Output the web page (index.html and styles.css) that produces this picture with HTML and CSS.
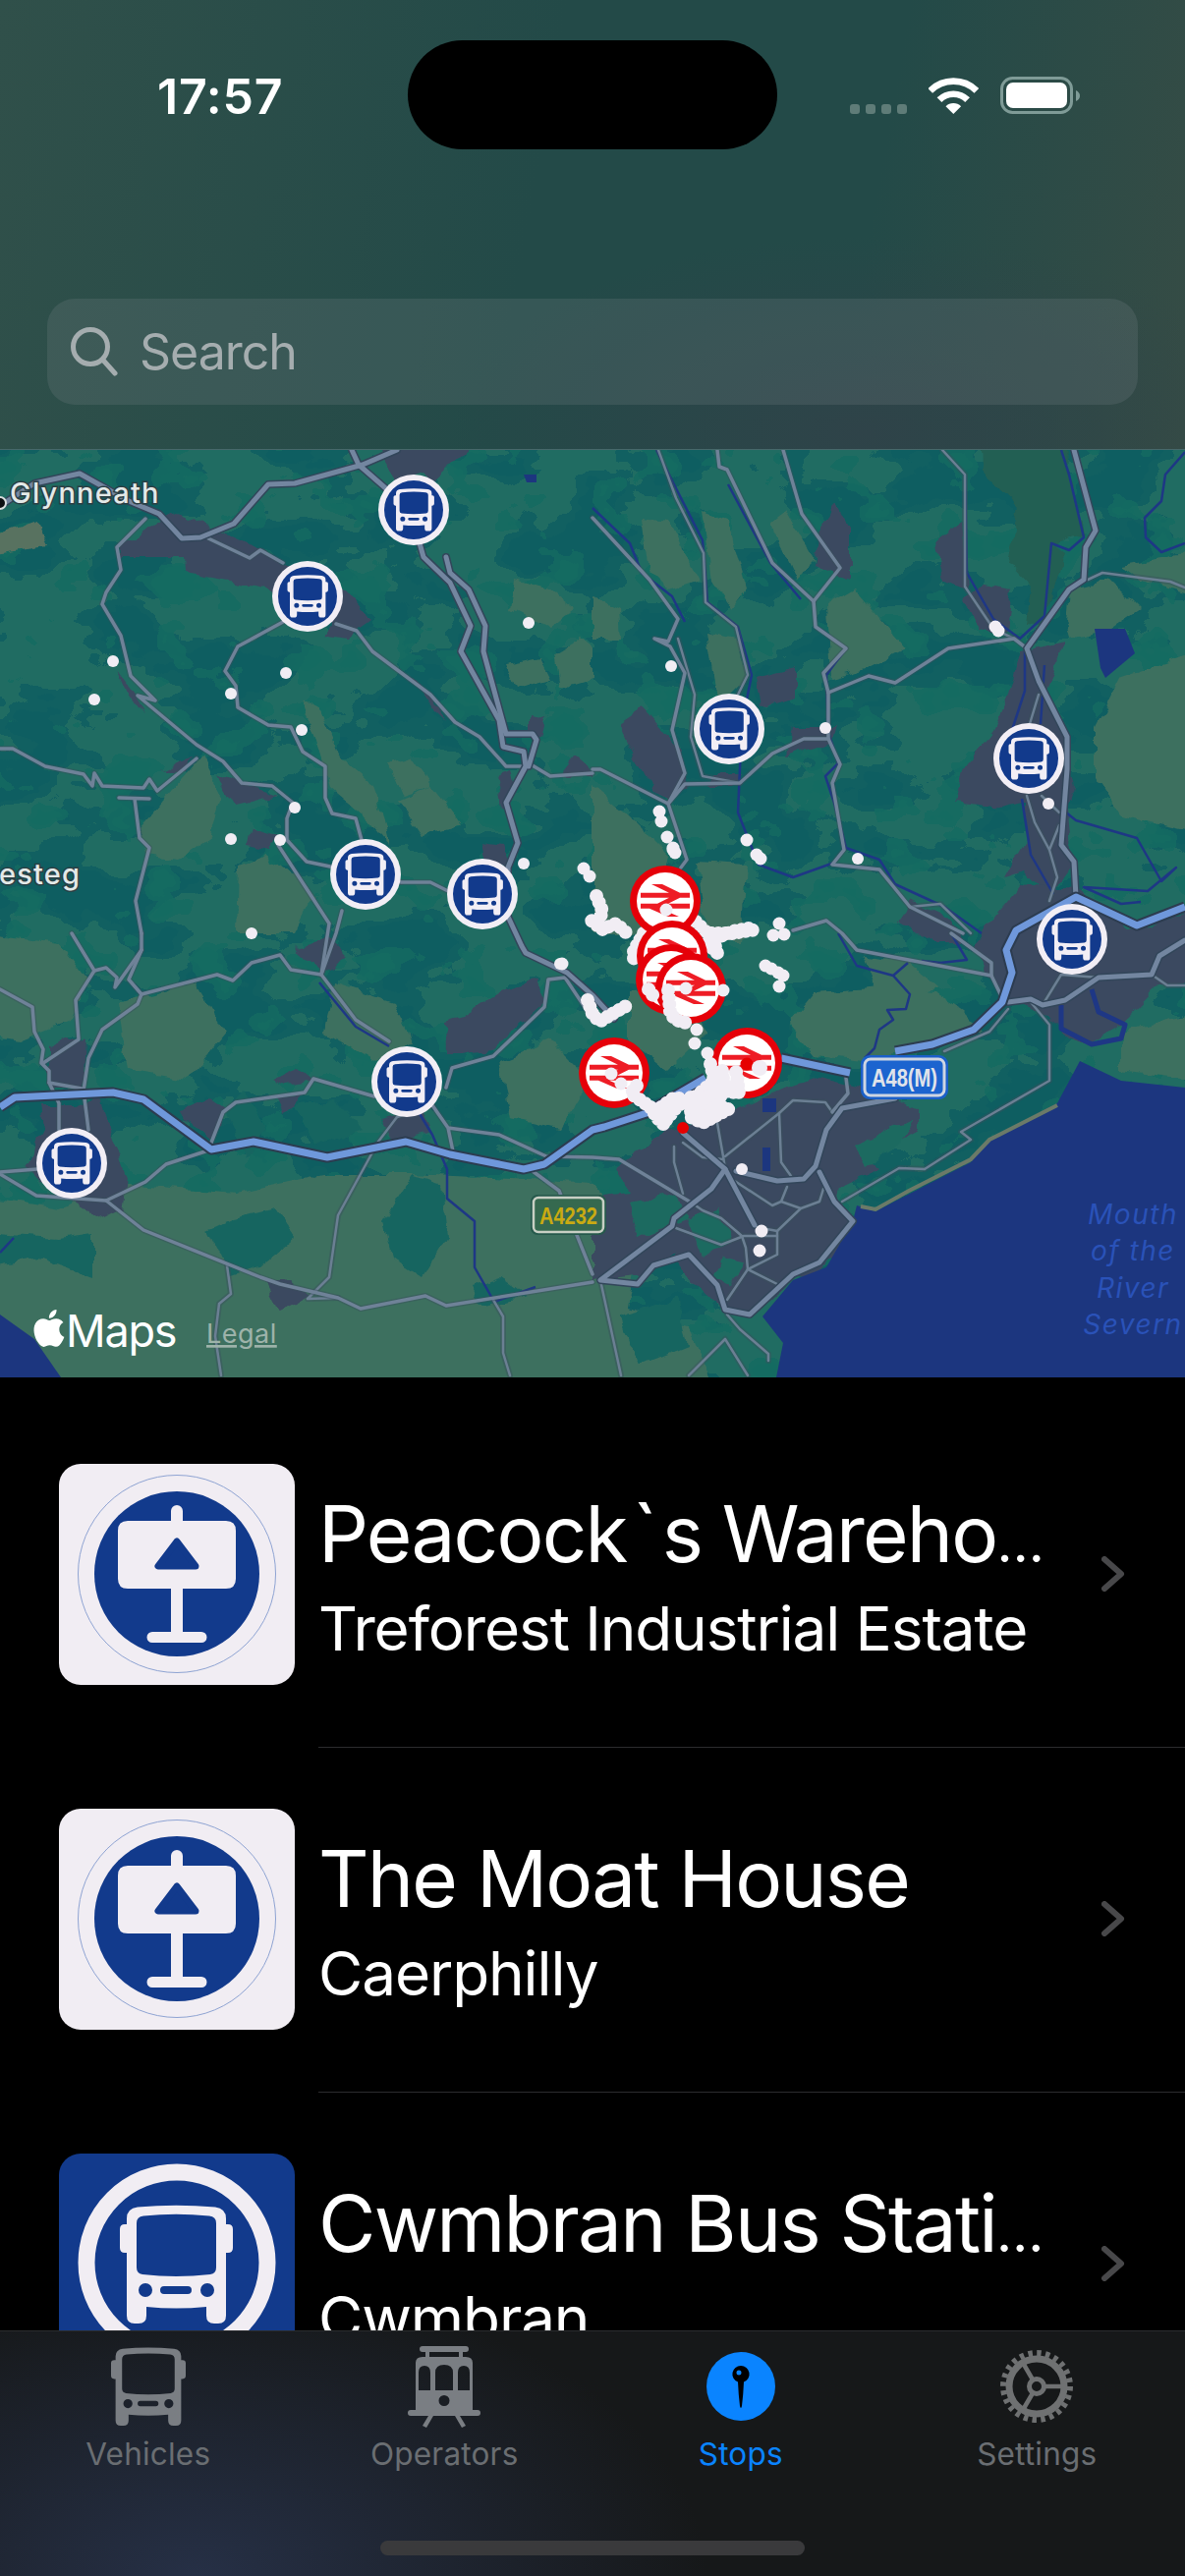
FILE: index.html
```html
<!DOCTYPE html>
<html lang="en">
<head>
<meta charset="utf-8">
<title>Stops</title>
<link rel="stylesheet" href="styles.css">
</head>
<body>
<svg class="defs" width="0" height="0" aria-hidden="true">
  <defs>
    <path id="bus" fill-rule="evenodd" d="M7 14Q7 4 18 2.5Q57-1 97 2.5Q108 4 108 14V20H110Q115 20 115 25V44Q115 49 110 49H108V113Q108 121 100 121H96Q88 121 88 113V104Q57 107 27 104V113Q27 121 19 121H15Q7 121 7 113V49H5Q0 49 0 44V25Q0 20 5 20H7ZM17 19Q17 12 24 11.5Q57 8 91 11.5Q98 12 98 19V64Q98 70 92 71Q57 75 23 71Q17 70 17 64ZM26 80A7 7 0 1 0 26 94A7 7 0 1 0 26 80ZM89 80A7 7 0 1 0 89 94A7 7 0 1 0 89 80ZM45 83H69Q73 83 73 87Q73 91 69 91H45Q41 91 41 87Q41 83 45 83Z"/>
  </defs>
</svg>
<main class="phone">
  <header class="top">
    <div class="status">
      <div class="status-left"><span class="time">17:57</span></div>
      <div class="island"></div>
      <div class="status-right">
        <div class="signal"><i></i><i></i><i></i><i></i></div>
        <svg class="wifi" width="51" height="37" viewBox="0 0 51 37"><path class="wifi-arc" d="M1.7 13.4A33.4 33.4 0 0 1 48.9 13.4"/><path class="wifi-arc" d="M11 22.7A20.2 20.2 0 0 1 39.6 22.7"/><path class="wifi-dot" d="M25.3 37L17.5 29.2A11 11 0 0 1 33.1 29.2Z"/></svg>
        <svg class="battery" width="82" height="38" viewBox="0 0 82 38"><rect class="bat-shell" x="1.5" y="1.5" width="71" height="35" rx="11"/><rect class="bat-fill" x="6" y="6" width="62" height="26" rx="7"/><path class="bat-nub" d="M77 14Q81 16 81 19.500Q81 23 77 25Z"/></svg>
      </div>
    </div>
    <div class="search">
      <svg class="search-icon" width="48" height="50" viewBox="0 0 48 50"><circle cx="20" cy="20" r="17.500"/><path d="M32.500 33L45 47"/></svg>
      <span class="search-text">Search</span>
    </div>
  </header>

  <section class="map">
    <svg class="map-svg" width="1206" height="944" viewBox="0 458 1206 944">
      <defs>
        <filter id="mottleA" x="0" y="0" width="100%" height="100%" color-interpolation-filters="sRGB">
          <feTurbulence type="fractalNoise" baseFrequency=".011 .017" numOctaves="4" seed="11"/>
          <feColorMatrix type="matrix" values="0 0 0 0 .055 0 0 0 0 .37 0 0 0 0 .38 1 0 0 0 0"/>
          <feComponentTransfer><feFuncA type="discrete" tableValues="0 0 0 0 0 .85 1 1 1 1"/></feComponentTransfer>
        </filter>
        <filter id="mottleB" x="0" y="0" width="100%" height="100%" color-interpolation-filters="sRGB">
          <feTurbulence type="fractalNoise" baseFrequency=".02 .026" numOctaves="3" seed="31"/>
          <feColorMatrix type="matrix" values="0 0 0 0 .08 0 0 0 0 .42 0 0 0 0 .38 1 0 0 0 0"/>
          <feComponentTransfer><feFuncA type="discrete" tableValues="0 0 0 0 0 0 .8 1 1 1"/></feComponentTransfer>
        </filter>
        <filter id="rough" x="-5%" y="-5%" width="110%" height="110%">
          <feTurbulence type="fractalNoise" baseFrequency=".06" numOctaves="2" seed="5"/>
          <feDisplacementMap in="SourceGraphic" scale="12" xChannelSelector="R" yChannelSelector="G"/>
        </filter>
        <g id="major">
          <path d="M0 515 35 492 81 482 131 510 162 523 185 548 204 547 238 533 273 493 300 492 369 473 404 458"/>
          <path d="M358 458 365 473 404 507 427 553 431 567 458 593 479 637 469 663 508 733 512 760 533 765 535 780 515 817 527 858 517 883 517 933 531 963 535 970 577 990 603 1013 625 1037"/>
          <path d="M454 567 458 583 477 600 494 637 492 663 515 747 542 747 546 753 538 780"/>
          <path d="M1093 458 1115 540 1105 557 1103 590 1088 600 1045 660 1057 693 1086 750 1086 783 1080 860 1093 877 1095 913"/>
          <path d="M1034 947 1024 967 1030 990 1020 1020 991 1048"/>
          <path d="M738 1190 724 1210 686 1240 684 1248 611 1303 649 1307 665 1288 701 1277 730 1308 738 1333 763 1338 807 1297 834 1285 868 1243 849 1223 834 1193"/>
          <path d="M749 1192 791 1202 818 1200 830 1187 841 1150 857 1128 911 1118"/>
          <path d="M1026 1020 1049 1017 1061 1023 1084 1018 1118 995 1172 992 1180 973 1206 957"/>
          <path d="M695 1153 738 1190 768 1247"/>
        </g>
        <g id="minor">
          <path d="M148 528 119 557 123 580 108 603 104 615 123 647 133 688 158 713 140 708 200 758 227 775 246 797 277 800 298 817 292 833 292 855 312 877 336 882"/>
          <path d="M0 762 13 762 46 780 85 788 94 800 96 787 104 800 146 802 152 793 160 805 200 772"/>
          <path d="M121 812 152 813M137 813 142 853 152 863 138 917 144 950"/>
          <path d="M212 548 254 568 265 560 288 573"/>
          <path d="M288 633 242 658 229 683 240 698 242 720 273 738 296 740 308 765 331 780 331 812 338 828 362 833 368 855"/>
          <path d="M342 635 363 642 379 663 438 707 463 735 488 750 515 780 531 780"/>
          <path d="M408 898 438 898 458 908"/>
          <path d="M540 778 560 790 603 787"/>
          <path d="M283 860 335 940 327 992 362 1038 396 1060"/>
          <path d="M348 927 342 950 327 992"/>
          <path d="M73 950 96 988 108 985 119 995 117 1005 144 967 144 950"/>
          <path d="M0 1007 33 1025 35 1050 44 1068 42 1082 50 1090 50 1102 60 1123 60 1150"/>
          <path d="M144 1012 131 997 144 967M96 988 77 1018 80 1058 44 1082"/>
          <path d="M144 1012 140 1022 104 1048 90 1077 85 1110 90 1150"/>
          <path d="M144 1012 221 992 237 998 256 980 285 972 296 987 327 992"/>
          <path d="M50 1102 83 1108"/>
          <path d="M454 1107 460 1087 502 1075 554 1025 558 997 575 995 603 1037"/>
          <path d="M319 1098 381 1116M319 1098 310 1112 240 1122 227 1132 215 1163"/>
          <path d="M215 1170 169 1185 148 1203 108 1222"/>
          <path d="M0 1193 38 1190M0 1195 37 1217 108 1222 146 1252 265 1300 285 1307 344 1321 367 1332 433 1319 454 1329 603 1305"/>
          <path d="M440 1125 456 1148 461 1172M456 1148 508 1155 556 1177 603 1178 630 1180 705 1225"/>
          <path d="M542 1192 569 1212 603 1297"/>
          <path d="M603 527 661 590 690 630 680 653 666 650 682 658 697 685 684 743 697 787 680 818 699 875 693 883"/>
          <path d="M797 458 816 523 855 578 828 612 830 638 861 660 838 685 843 705 843 752 855 778 847 797 859 865 847 880 895 885 926 923 980 950"/>
          <path d="M843 752 818 752 786 767 753 797 697 798 680 818"/>
          <path d="M603 783 611 783 680 818"/>
          <path d="M730 458 732 475 740 478 786 573 828 612"/>
          <path d="M843 705 884 688 911 695 965 660 1032 650 1045 660"/>
          <path d="M807 947 841 937 857 950 872 967 1009 993 1022 1020"/>
          <path d="M861 1097 863 1113 847 1132"/>
          <path d="M968 950 1009 980 1009 993"/>
        </g>
        <g id="thin">
          <path d="M670 458 688 507 716 563 718 613 749 638 761 687 751 707"/>
          <path d="M690 650 707 707 703 750 715 790 753 797"/>
          <path d="M959 458 982 483 982 597 1011 640 1032 650"/>
          <path d="M1107 590 1122 583 1191 592 1206 598"/>
          <path d="M1057 707 1047 740M1045 810 1053 837 1068 865 1076 893 1068 917M1078 840 1068 865M1078 827 1060 810"/>
          <path d="M926 923 957 920 988 950"/>
          <path d="M730 1143 736 1177 738 1190"/>
          <path d="M738 1177 793 1133 807 1120 840 1122 847 1132"/>
          <path d="M793 1133 795 1183 805 1197"/>
          <path d="M857 1223 915 1189 941 1190 988 1160 978 1152 1068 1100 1068 1043 1049 1020"/>
          <path d="M740 1197 786 1227 795 1223 801 1208M795 1223 815 1230 834 1223 838 1210M815 1230 791 1253 775 1250"/>
          <path d="M791 1253 791 1277 761 1292 740 1323"/>
          <path d="M761 1292 759 1270 755 1258 734 1240 715 1232 705 1225"/>
          <path d="M688 1250 734 1267 757 1258 791 1258"/>
          <path d="M761 1292 791 1307"/>
          <path d="M686 1167 686 1183 695 1215M695 1163 715 1178 736 1180"/>
          <path d="M611 1303 632 1400M738 1363 701 1400M738 1363 761 1400M753 1353 782 1378 782 1385M740 1338 753 1353"/>
          <path d="M1118 995 1080 992 1061 1023M1172 992 1188 1003 1206 1003"/>
          <path d="M1026 1027 1007 1050 961 1070"/>
          <path d="M404 1137 385 1162 344 1237 335 1300 313 1322 344 1321"/>
          <path d="M440 1125 404 1137"/>
          <path d="M231 1288 235 1317 223 1327 219 1360 225 1400"/>
          <path d="M502 1323 512 1340 512 1377 519 1400"/>
          <path d="M408 898 372 890"/>
        </g>
        <g id="br">
          <path d="M-25-8.300H25V-3.300H-25ZM-25 2.700H25V7.700H-25ZM-14-17H-3L15-8.300H4ZM4-3.300H15L3 2.700H-8ZM-16 7.700H-5L14 16H3Z"/>
        </g>
        <g id="rail">
          <circle class="rail-ring" r="36"/><circle class="rail-disc" r="29"/><use class="rail-mark" href="#br"/>
        </g>
        <g id="busm">
          <circle class="bus-ring" r="36"/><circle class="bus-disc" r="30"/><use class="bus-mark" href="#bus" transform="translate(-20.500 -22) scale(.36)"/>
        </g>
      </defs>

      <rect class="land" x="0" y="458" width="1206" height="944"/>
      <rect class="mottle-a" x="0" y="458" width="1206" height="944" filter="url(#mottleA)"/>
      <rect class="mottle-b" x="0" y="458" width="1206" height="944" filter="url(#mottleB)"/>

      <g class="olive" filter="url(#rough)">
        <path d="M-30 1215 60 1230 130 1205 240 1215 330 1195 420 1195 520 1200 603 1205 650 1260 640 1330 700 1350 740 1440H-30Z"/>
        <path d="M142 843 205 770 225 810 215 850 180 875 150 870Z"/>
        <path d="M242 883 270 870 320 910 300 950 240 950Z"/>
        <path d="M305 710 325 720 345 770 380 800 395 860 370 830 335 800 320 750Z"/>
        <path d="M396 777 420 770 440 800 410 810Z"/>
        <path d="M405 815 440 800 470 840 430 850Z"/>
        <path d="M525 590 560 600 585 620 560 640 520 620Z"/>
        <path d="M515 677 550 670 560 690 525 700Z"/>
        <path d="M565 665 590 650 603 660 603 690 570 700Z"/>
        <path d="M653 527 680 530 710 590 680 600 660 580Z"/>
        <path d="M715 520 740 530 760 600 745 620 725 590Z"/>
        <path d="M784 533 800 520 830 570 810 590Z"/>
        <path d="M841 617 870 600 920 660 880 680 845 690Z"/>
        <path d="M1115 740 1140 690 1230 660 1230 850 1140 830 1115 790Z"/>
        <path d="M1088 600 1130 590 1160 620 1130 640 1090 650 1085 630Z"/>
        <path d="M1140 575 1230 560 1230 610 1160 590Z"/>
        <path d="M603 607 630 620 632 650 603 650Z"/>
        <path d="M718 643 750 650 760 690 730 720Z"/>
        <path d="M710 877 760 880 755 960 720 960Z"/>
        <path d="M603 800 640 830 680 870 660 950 603 950Z"/>
        <path d="M803 1043 830 1010 900 1005 950 1010 980 1030 1000 1050 930 1065 880 1080 830 1075Z"/>
        <path d="M1140 1050 1230 1030 1230 1100 1140 1090Z"/>
        <path d="M880 975 925 980 955 1005 900 1025Z"/>
        <path d="M-30 950 60 960 90 1000 70 1040 20 1060 -30 1050Z"/>
        <path d="M120 1020 200 1000 230 1050 190 1100 130 1090Z"/>
        <path d="M340 1000 400 1020 420 1060 380 1080 330 1050Z"/>
        <path d="M510 1080 560 1060 600 1100 570 1150 520 1140Z"/>
        <path d="M640 1010 690 1000 720 1050 680 1090 640 1060Z"/>
      </g>
      <path class="tan" filter="url(#rough)" d="M-20 550 38 530 48 557 -20 567Z"/>
      <path class="forest" filter="url(#rough)" d="M997 440 1080 440 1103 543 1072 553 1084 562 1061 637 1045 635 1049 597 1026 573 1036 517 1003 483Z"/>
      <g class="teal" filter="url(#rough)">
        <path d="M212 1253 240 1240 280 1230 300 1260 265 1290 235 1300Z"/>
        <path d="M390 1245 420 1195 450 1205 455 1260 430 1300 400 1280Z"/>
        <path d="M480 1310 510 1300 540 1320 490 1330Z"/>
        <path d="M60 1260 95 1255 95 1300 40 1280 -20 1290 -20 1255Z"/>
        <path d="M630 1340 690 1320 700 1370 650 1390Z"/>
        <path d="M230 1130 250 1110 270 1150 250 1180Z"/>
        <path d="M300 1125 340 1120 370 1150 320 1165Z"/>
      </g>
      <g class="urban" filter="url(#rough)">
        <path d="M385 440 496 440 440 490 430 480 400 490Z"/>
        <path d="M123 557 180 520 254 553 288 573 346 597 379 630 354 650 331 647 338 633 269 597 188 583 187 567 123 567Z"/>
        <path d="M119 683 150 725 130 710Z"/>
        <path d="M420 690 440 710 455 735 440 720Z"/>
        <path d="M220 787 240 795 285 810 240 820Z"/>
        <path d="M165 785 195 770 190 785Z"/>
        <path d="M573 785 585 770 603 785 603 790 575 790Z"/>
        <path d="M505 790 520 785 525 800 510 820Z"/>
        <path d="M540 727 555 730 550 750 540 750Z"/>
        <path d="M255 843 285 850 275 865 250 860Z"/>
        <path d="M490 857 510 860 520 885 495 880Z"/>
        <path d="M849 510 865 540 865 590 830 575 835 540Z"/>
        <path d="M953 550 980 530 985 600 960 590Z"/>
        <path d="M980 610 1000 595 1030 600 1025 645 995 640Z"/>
        <path d="M770 690 810 680 810 710 775 720Z"/>
        <path d="M805 740 850 740 845 755 800 770Z"/>
        <path d="M630 737 655 720 690 760 700 800 680 815 655 790Z"/>
        <path d="M725 787 755 787 745 800 720 800Z"/>
        <path d="M972 817 980 783 1011 743 1026 710 1038 663 1084 653 1065 703 1080 737 1095 800 1088 823 1092 880 1068 913 1041 887 1022 893 1045 850 1045 817 1018 823Z"/>
        <path d="M990 960 1040 900 1096 905 1150 945 1230 925 1230 1000 1180 1003 1141 1043 1103 1063 1080 1050 1065 1033 1022 1017Z"/>
        <path d="M926 915 960 930 985 960 950 960 915 940Z"/>
        <path d="M680 1150 730 1137 776 1117 834 1097 911 1117 934 1127 934 1150 903 1167 884 1180 895 1190 853 1210 849 1227 872 1243 841 1290 807 1303 772 1333 763 1340 738 1333 699 1300 684 1277 657 1297 603 1303 603 1217 641 1213 625 1190 665 1160Z"/>
        <path d="M50 1065 70 1055 88 1060 85 1110 50 1105Z"/>
        <path d="M42 1125 75 1125 100 1115 130 1200 125 1230 105 1240 70 1220 25 1190 45 1150Z"/>
        <path d="M181 1130 215 1120 230 1130 215 1160Z"/>
        <path d="M281 1117 310 1115 300 1125 290 1135Z"/>
        <path d="M277 1098 305 1087 320 1100 290 1105Z"/>
        <path d="M454 1040 470 1035 510 1010 545 997 555 1020 500 1070 470 1075 455 1075Z"/>
        <path d="M385 1140 430 1130 440 1150 400 1160Z"/>
        <path d="M270 1305 295 1303 315 1320 285 1335Z"/>
        <path d="M300 965 335 955 355 975 330 990Z"/>
      </g>
      <g class="green-inset" filter="url(#rough)">
        <path d="M640 1225 690 1215 700 1240 650 1260Z"/>
        <path d="M700 1240 730 1230 745 1265 715 1280Z"/>
        <path d="M870 1165 900 1150 930 1140 910 1170 880 1190Z"/>
        <path d="M735 1280 755 1285 745 1310 725 1300Z"/>
      </g>

      <path class="water" d="M872 1227 891 1233 988 1183 1007 1160 1076 1123 1099 1080 1141 1100 1206 1107V1402H790L797 1367 776 1340 807 1303 841 1290 868 1243Z"/>
      <path class="water" d="M0 1338 35 1363 62 1402H0Z"/>
      <path class="lake" d="M1114 640 1145 640 1155 665 1125 690 1120 680Z"/>
      <path class="lake" d="M533 483H546V491H536ZM776 1118H790V1132H776ZM776 1168H784V1192H776Z"/>
      <path class="sand" d="M876 1228 891 1231 925 1212 988 1180 1007 1160 1076 1125"/>

      <g class="river">
        <path d="M603 517 641 553 653 583 684 607 697 633"/>
        <path d="M668 458 715 550 720 613 751 638 765 687 755 737 751 827 772 880 807 893 849 878"/>
        <path d="M741 493 784 573 815 610"/>
        <path d="M834 640 861 660 841 687 843 745 853 777 840 790 849 817 861 863 895 875 911 900 961 923 999 950"/>
        <path d="M982 483 984 583 1011 630 1038 650 1063 627 1070 553 1088 560 1103 547 1088 483 1080 458"/>
        <path d="M1206 460 1186 483 1182 510 1165 527 1166 547 1182 562 1206 553"/>
        <path d="M1043 663 1043 703 1030 743M1063 677 1059 737"/>
        <path d="M1040 813 1049 870 1072 910M1080 823 1095 835 1157 853 1182 897 1197 883 1168 907 1103 903 1141 920 1161 918"/>
        <path d="M853 950 872 983 909 993 926 1012 922 1027 903 1028 909 1038 895 1048 890 1067 880 1077M924 980 909 993M938 978 957 980 984 977 968 950"/>
        <path class="river-wide" d="M1111 1007 1118 1030 1145 1043 1141 1057 1111 1063 1080 1047 1080 1023"/>
        <path d="M325 1000 362 1045 396 1065M400 1130 423 1127 440 1155 455 1190 455 1220 483 1243 483 1290 503 1325 545 1310"/>
        <path d="M0 1275 14 1260"/>
      </g>

      <use class="casing-minor" href="#thin"/><use class="road-thin" href="#thin"/>
      <use class="casing-minor" href="#minor"/><use class="road-minor" href="#minor"/>
      <use class="casing-major" href="#major"/><use class="road-major" href="#major"/>

      <g class="motorway-case">
        <path d="M0 1127 15 1117 115 1112 146 1119 215 1170 258 1162 333 1178 413 1162 458 1175 533 1190 554 1185 603 1150 615 1147 661 1132 670 1125 718 1097"/>
        <path d="M795 1077 865 1092M911 1070 949 1063 991 1048 1020 1020 1030 990 1024 967 1034 947 1095 913 1157 942 1206 923"/>
      </g>
      <g class="motorway">
        <path d="M0 1127 15 1117 115 1112 146 1119 215 1170 258 1162 333 1178 413 1162 458 1175 533 1190 554 1185 603 1150 615 1147 661 1132 670 1125 718 1097"/>
        <path d="M795 1077 865 1092M911 1070 949 1063 991 1048 1020 1020 1030 990 1024 967 1034 947 1095 913 1157 942 1206 923"/>
      </g>

      <g class="shield-a4232">
        <rect class="sh-outer" x="540" y="1216" width="77" height="41" rx="7"/>
        <rect class="sh-inner" x="543" y="1219" width="71" height="35" rx="5"/>
        <text class="sh-text-y" x="578.500" y="1246" text-anchor="middle" textLength="59" lengthAdjust="spacingAndGlyphs">A4232</text>
      </g>
      <g class="shield-a48">
        <rect class="sh-outer-b" x="876" y="1074" width="89" height="45" rx="9"/>
        <rect class="sh-inner-b" x="880" y="1078" width="81" height="37" rx="6"/>
        <text class="sh-text-w" x="920.500" y="1106" text-anchor="middle" textLength="67" lengthAdjust="spacingAndGlyphs">A48(M)</text>
      </g>

      <circle class="city-dot" cx="0" cy="512" r="6"/>
      <text class="place" x="10" y="512">Glynneath</text>
      <text class="place" x="-1" y="900">esteg</text>
      <g class="sea-label">
        <text x="1153" y="1246">Mouth</text>
        <text x="1153" y="1283">of the</text>
        <text x="1153" y="1321">River</text>
        <text x="1153" y="1358">Severn</text>
      </g>

      <g class="stops">
        <circle r="6" cx="115" cy="673"/><circle r="6" cx="96" cy="712"/><circle r="6" cx="291" cy="685"/><circle r="6" cx="235" cy="706"/><circle r="6" cx="307" cy="743"/><circle r="6" cx="300" cy="822"/><circle r="6" cx="235" cy="854"/><circle r="6" cx="285" cy="855"/><circle r="6" cx="538" cy="634"/><circle r="6" cx="533" cy="879"/><circle r="6" cx="256" cy="950"/><circle r="6" cx="570" cy="981"/><circle r="6" cx="683" cy="678"/><circle r="6" cx="840" cy="741"/><circle r="6.500" cx="1013" cy="638"/><circle r="6.500" cx="1016" cy="642"/><circle r="6" cx="1067" cy="818"/><circle r="6" cx="873" cy="874"/><circle r="6" cx="755" cy="1190"/><circle r="6.500" cx="775" cy="1253"/><circle r="6.500" cx="773" cy="1273"/>
        <circle r="6.500" cx="671" cy="826"/><circle r="6.500" cx="673" cy="836"/><circle r="6.500" cx="679" cy="852"/><circle r="6.500" cx="685" cy="863"/><circle r="6.500" cx="687" cy="868"/>
        <circle r="6.500" cx="760" cy="855"/>
      </g>

      <use href="#busm" x="421" y="519"/><use href="#busm" x="313" y="607"/><use href="#busm" x="372" y="890"/><use href="#busm" x="491" y="910"/><use href="#busm" x="742" y="742"/><use href="#busm" x="1047" y="772"/><use href="#busm" x="1091" y="956"/><use href="#busm" x="414" y="1101"/><use href="#busm" x="73" y="1184"/>

      <g class="stops-line">
        <path d="M708 938 720 950 745 950 770 946"/>
        <path d="M722 958 745 948 768 944"/>
        <path d="M720 960 730 970 722 945"/>
        <path d="M655 950 645 968 645 976"/>
      </g>
      <use href="#rail" x="677" y="917"/><use href="#rail" x="684" y="973"/><use href="#rail" x="683" y="997"/><use href="#rail" x="703" y="1006"/><use href="#rail" x="625" y="1092"/><use href="#rail" x="760" y="1082"/>

      <g class="stops">
        <circle r="6.500" cx="594" cy="884"/><circle r="6.500" cx="600" cy="892"/>
        <circle r="6.500" cx="685" cy="865"/><circle r="6.500" cx="770" cy="870"/><circle r="6.500" cx="774" cy="874"/>
        <circle r="6.500" cx="572" cy="981"/>
        <circle r="6.500" cx="678" cy="926"/><circle r="6.500" cx="698" cy="1006"/><circle r="6.500" cx="736" cy="1008"/>
        <circle r="6.500" cx="709" cy="1048"/><circle r="6.500" cx="707" cy="1062"/><circle r="6.500" cx="720" cy="1072"/>
        <circle r="6.500" cx="622" cy="1093"/><circle r="6.500" cx="632" cy="1103"/>
        <circle r="6.500" cx="787" cy="952"/><circle r="6.500" cx="793" cy="940"/><circle r="6.500" cx="798" cy="951"/>
        <circle r="6.500" cx="779" cy="983"/><circle r="6.500" cx="785" cy="986"/><circle r="6.500" cx="792" cy="990"/><circle r="6.500" cx="797" cy="993"/><circle r="6.500" cx="793" cy="1004"/>
      </g>
      <g class="stops-line">
        <path d="M607 912 613 927 610 937 602 937 613 946 627 940 638 950"/>
        <path d="M598 1018 603 1032 610 1040 623 1032 637 1024"/>
        <path d="M680 1008 682 1030 687 1038 698 1041"/>
        <path d="M660 1007 668 1018"/>
        <path d="M648 1105 642 1113 662 1127 668 1137 678 1147M673 1127 685 1118 693 1118"/>
        <path d="M703 1117 703 1137 715 1143 730 1135 745 1127"/>
        <path d="M723 1083 727 1100 707 1117 737 1110 752 1113 750 1093 747 1087"/>
        <path d="M735 1090 738 1112 718 1128 712 1120 745 1105"/>
        <path d="M720 1132 735 1122"/>
        <path d="M662 1127 678 1140 690 1125 700 1120"/>
        <path d="M700 1120 712 1135 722 1140 740 1122"/>
      </g>
      <circle class="red-dot" cx="695" cy="1148" r="6"/>
      <circle class="red-dot" cx="760" cy="1083" r="6.500"/>
      <circle class="stop-lone" cx="773" cy="1087" r="8"/>

      <g class="maps-logo">
        <path class="apple" transform="translate(31 1333) scale(1.58)" d="M12.152 6.896c-.948 0-2.415-1.078-3.96-1.04-2.04.027-3.91 1.183-4.961 3.014-2.117 3.675-.546 9.103 1.519 12.09 1.013 1.454 2.208 3.09 3.792 3.039 1.52-.065 2.09-.987 3.935-.987 1.831 0 2.35.987 3.96.948 1.637-.026 2.676-1.48 3.676-2.948 1.156-1.688 1.636-3.325 1.662-3.415-.039-.013-3.182-1.221-3.22-4.857-.026-3.04 2.48-4.494 2.597-4.559-1.429-2.09-3.623-2.324-4.39-2.376-2-.156-3.675 1.09-4.61 1.09zM15.53 3.83c.843-1.012 1.4-2.427 1.245-3.83-1.207.052-2.662.805-3.532 1.818-.78.896-1.454 2.338-1.273 3.714 1.338.104 2.715-.688 3.559-1.701"/>
        <text class="maps-word" x="67" y="1371">Maps</text>
        <text class="legal" x="210" y="1367">Legal</text>
      </g>
    </svg>
  </section>

  <section class="list">
    <article class="row">
      <div class="tile tile-light">
        <svg width="240" height="225" viewBox="0 0 240 225"><circle class="thin-ring" cx="120" cy="112" r="100.500"/><circle class="disc" cx="120" cy="112" r="84"/><path class="sign" d="M114 48A6 6 0 0 1 126 48V58H170Q180 58 180 68V117Q180 127 170 127H126V171H145A5.500 5.500 0 0 1 145 182H95A5.500 5.500 0 0 1 95 171H114V127H70Q60 127 60 117V68Q60 58 70 58H114Z"/><path class="sign-tri" d="M120 79 101 104H139Z"/></svg>
      </div>
      <div class="body">
        <div class="text">
          <h2 class="title">Peacock<span class="tick">`</span>s Wareho<span class="ell">…</span></h2>
          <p class="sub">Treforest Industrial Estate</p>
        </div>
        <svg class="chev" width="24" height="36" viewBox="0 0 24 36"><path d="M3 3 20 18 3 33"/></svg>
      </div>
    </article>
    <article class="row">
      <div class="tile tile-light">
        <svg width="240" height="225" viewBox="0 0 240 225"><circle class="thin-ring" cx="120" cy="112" r="100.500"/><circle class="disc" cx="120" cy="112" r="84"/><path class="sign" d="M114 48A6 6 0 0 1 126 48V58H170Q180 58 180 68V117Q180 127 170 127H126V171H145A5.500 5.500 0 0 1 145 182H95A5.500 5.500 0 0 1 95 171H114V127H70Q60 127 60 117V68Q60 58 70 58H114Z"/><path class="sign-tri" d="M120 79 101 104H139Z"/></svg>
      </div>
      <div class="body">
        <div class="text">
          <h2 class="title">The Moat House</h2>
          <p class="sub">Caerphilly</p>
        </div>
        <svg class="chev" width="24" height="36" viewBox="0 0 24 36"><path d="M3 3 20 18 3 33"/></svg>
      </div>
    </article>
    <article class="row">
      <div class="tile tile-blue">
        <svg width="240" height="225" viewBox="0 0 240 225"><circle class="bus-tile-ring" cx="120" cy="111" r="92"/><use class="bus-tile-mark" href="#bus" x="62" y="52"/></svg>
      </div>
      <div class="body">
        <div class="text">
          <h2 class="title">Cwmbran Bus Stati<span class="ell">…</span></h2>
          <p class="sub">Cwmbran</p>
        </div>
        <svg class="chev" width="24" height="36" viewBox="0 0 24 36"><path d="M3 3 20 18 3 33"/></svg>
      </div>
    </article>
  </section>

  <nav class="tabs">
    <div class="tab-row">
      <div class="tab">
        <svg class="tab-icon" width="76" height="84" viewBox="0 0 115 127"><use href="#bus" y="3"/></svg>
        <span class="tab-label">Vehicles</span>
      </div>
      <div class="tab">
        <svg class="tab-icon" width="76" height="84" viewBox="0 0 76 84"><path fill-rule="evenodd" d="M16 1H60Q63 1 63 4Q63 7 60 7H57V12H60Q67 12 67 18V66H72Q75 66 75 69Q75 72 72 72H54L60 82 56 84 49 72H27L20 84 16 82 22 72H4Q1 72 1 69Q1 66 4 66H9V18Q9 12 16 12H19V7H16Q13 7 13 4Q13 1 16 1ZM23 7V12H53V7ZM18 21Q12 21 12 28V46H24V28Q24 21 18 21ZM38 20Q29 20 29 28V46H47V28Q47 20 38 20ZM58 21Q52 21 52 28V46H64V28Q64 21 58 21ZM38 51A5.500 5.500 0 1 0 38 62A5.500 5.500 0 1 0 38 51Z"/></svg>
        <span class="tab-label">Operators</span>
      </div>
      <div class="tab tab-active">
        <svg class="tab-icon" width="76" height="84" viewBox="0 0 76 84"><circle class="stop-disc" cx="38" cy="42" r="35"/><path class="stop-pin" fill-rule="evenodd" d="M38 21A8.500 8.500 0 0 1 41 37.500Q40.500 50 39 62Q38 66 37 62Q35.500 50 35 37.500A8.500 8.500 0 0 1 38 21ZM36 25.500A2.500 2.500 0 1 0 36 30.500A2.500 2.500 0 1 0 36 25.500Z"/></svg>
        <span class="tab-label">Stops</span>
      </div>
      <div class="tab">
        <svg class="tab-icon" width="76" height="84" viewBox="0 0 76 84"><g class="gear"><circle class="gear-teeth" cx="38" cy="42" r="34"/><circle class="gear-ring" cx="38" cy="42" r="28"/><circle class="gear-hub" cx="38" cy="42" r="7.500"/><path class="gear-spoke" d="M45.500 42H66M34.200 35.500 24 18M34.200 48.500 24 66"/></g></svg>
        <span class="tab-label">Settings</span>
      </div>
    </div>
    <div class="home"></div>
  </nav>
</main>
</body>
</html>
```

FILE: styles.css
```css
* { box-sizing: border-box; }
html, body { margin: 0; padding: 0; background: #000; }
body { font-family: Inter, "Noto Sans", "Liberation Sans", sans-serif; color: #fff; }
.defs { position: absolute; }
.phone { width: 1206px; height: 2622px; display: flex; flex-direction: column; overflow: hidden; }

/* header */
.top { height: 458px; flex: none; display: flex; flex-direction: column; border-bottom: 1px solid #47686a;
  background: radial-gradient(420px 200px at 880px 440px, #2f4349 0%, rgba(47,67,73,0) 100%), linear-gradient(100deg, #30504a 0%, #234a48 45%, #234a48 72%, #364c45 100%); }
.status { display: flex; height: 152px; padding-top: 41px; flex: none; }
.status-left { width: 415px; height: 75px; padding-left: 160px; display: flex; align-items: flex-end; }
.time { font-size: 50px; font-weight: 600; line-height: 36px; letter-spacing: .8px; color: #fff; white-space: nowrap; }
.island { width: 376px; height: 111px; background: #000; border-radius: 56px; flex: none; }
.status-right { height: 75px; padding-left: 74px; display: flex; align-items: flex-end; }
.signal { display: flex; gap: 6px; width: 58px; }
.signal i { display: block; width: 10px; height: 10px; border-radius: 3px; background: #5f7c78; }
.wifi { margin-left: 22px; }
.wifi-arc { fill: none; stroke: #fff; stroke-width: 6.700; }
.wifi-dot { fill: #fff; }
.battery { margin-left: 22px; }
.bat-shell { fill: none; stroke: #7f9b97; stroke-width: 3; }
.bat-fill { fill: #fff; }
.bat-nub { fill: #7f9b97; }
.search { margin: 152px 48px 0; height: 108px; border-radius: 28px; background: rgba(118,128,135,.24); display: flex; align-items: center; padding-left: 24px; flex: none; }
.search-icon { fill: none; stroke: #a5adaf; stroke-width: 5; stroke-linecap: round; flex: none; }
.search-text { margin-left: 22px; font-size: 50px; line-height: 60px; color: #a5adaf; letter-spacing: -1px; }

/* map */
.map { height: 944px; flex: none; overflow: hidden; }
.map-svg { display: block; }
.land { fill: #206c62; }
.mottle-a, .mottle-b { fill: #000; }
.olive { fill: #3e705f; }
.tan { fill: #587261; }
.forest { fill: #245e52; }
.teal { fill: #166560; }
.urban { fill: #3a4a60; }
.green-inset { fill: #1e6b60; }
.water { fill: #1c367f; }
.lake { fill: #1c367f; }
.sand { fill: none; stroke: #6b7a68; stroke-width: 4; }
.river { fill: none; stroke: #1e3785; stroke-width: 2.500; stroke-linejoin: round; }
.river-wide { stroke-width: 5; }
.casing-minor, .casing-major, .road-thin, .road-minor, .road-major { fill: none; stroke-linejoin: round; stroke-linecap: round; }
.casing-minor { stroke: #3a4f5e; stroke-width: 6; stroke-opacity: .45; }
.casing-major { stroke: #32465a; stroke-width: 8; }
.road-thin { stroke: #6b7f93; stroke-width: 2.500; }
.road-minor { stroke: #6f8298; stroke-width: 3.500; }
.road-major { stroke: #7386a0; stroke-width: 5; }
.motorway-case, .motorway { fill: none; stroke-linejoin: round; }
.motorway-case { stroke: #2c3c50; stroke-width: 11; }
.motorway { stroke: #6f98db; stroke-width: 7; }
.sh-outer { fill: #26594c; }
.sh-inner { fill: #35694f; stroke: #c8cfc4; stroke-width: 2.500; }
.sh-text-y { font-family: "Liberation Sans", sans-serif; font-weight: 700; font-size: 24px; fill: #c9aa12; }
.sh-outer-b { fill: #1a5fc8; }
.sh-inner-b { fill: #1c64cf; stroke: #cfd6e2; stroke-width: 3; }
.sh-text-w { font-family: "Liberation Sans", sans-serif; font-weight: 700; font-size: 26px; fill: #e0e3ea; }
.city-dot { fill: #0c1012; stroke: #d8dede; stroke-width: 2; }
.place { font-family: Inter, sans-serif; font-size: 29px; font-weight: 500; letter-spacing: 1.200px; fill: #e3e9e8; stroke: #2b3f44; stroke-width: 3px; paint-order: stroke; }
.sea-label text { font-family: Inter, sans-serif; font-size: 28px; font-style: italic; font-weight: 400; letter-spacing: 1.500px; fill: #2a52b8; text-anchor: middle; }
.stops circle, .stop-lone { fill: #f1edf4; }
.stops-line { fill: none; stroke: #f1edf4; stroke-width: 14; stroke-linecap: round; stroke-linejoin: round; stroke-dasharray: 0 7; }
.red-dot { fill: #e60000; }
.rail-ring { fill: #e50009; }
.rail-disc { fill: #fff; }
.rail-mark { fill: #ee1c25; }
.bus-ring { fill: #f2eef5; }
.bus-disc { fill: #123a8c; }
.bus-mark { fill: #f2eef5; }
.apple { fill: #fff; }
.maps-word { font-family: Inter, sans-serif; font-size: 45px; font-weight: 400; letter-spacing: -1.200px; fill: #fff; }
.legal { font-family: Inter, sans-serif; font-size: 27px; fill: #9db3aa; text-decoration: underline; letter-spacing: .5px; }

/* list */
.list { flex: 1 1 0; min-height: 0; overflow: hidden; background: #000; padding-top: 26px; }
.row { height: 351px; display: flex; padding-left: 60px; }
.tile { width: 240px; height: 225px; margin-top: 62px; border-radius: 22px; overflow: hidden; flex: none; }
.tile svg { display: block; }
.tile-light { background: #f1edf3; }
.tile-blue { background: #123a8c; }
.thin-ring { fill: none; stroke: #8ea3d2; stroke-width: 1; }
.disc { fill: #123a8c; }
.sign { fill: #f1edf3; }
.sign-tri { fill: #123a8c; stroke: #123a8c; stroke-width: 7; stroke-linejoin: round; }
.bus-tile-ring { fill: none; stroke: #f1edf3; stroke-width: 17; }
.bus-tile-mark { fill: #f1edf3; }
.body { flex: 1 1 0; min-width: 0; margin-left: 24px; display: flex; align-items: flex-start; border-bottom: 1px solid #2c2c2e; }
.row:last-child .body { border-bottom: 0; }
.text { flex: 1 1 0; min-width: 0; padding-top: 88px; }
.title { margin: 0; font-size: 80px; font-weight: 400; line-height: 90px; letter-spacing: -1.800px; color: #fff; white-space: nowrap; }
.tick { padding: 0 6px; }
.ell { font-size: 56px; line-height: 0; letter-spacing: 0; }
.sub { margin: 7px 0 0; font-size: 62px; font-weight: 400; line-height: 90px; letter-spacing: -1.100px; color: #fff; white-space: nowrap; }
.chev { flex: none; margin: 156px 61px 0 0; fill: none; stroke: #48484a; stroke-width: 6; stroke-linecap: round; stroke-linejoin: round; }

/* tabs */
.tabs { height: 250px; flex: none; border-top: 1px solid #2b2d2f;
  background: radial-gradient(520px 300px at 200px 250px, #263046 0%, rgba(38,48,70,0) 100%), #161819; display: flex; flex-direction: column; }
.tab-row { display: flex; padding-top: 14px; }
.tab { flex: 1 1 0; display: flex; flex-direction: column; align-items: center; color: #6a6e72; }
.tab-icon { display: block; fill: #7a7e83; }
.tab-label { font-size: 31.500px; line-height: 40px; margin-top: 7px; letter-spacing: .2px; }
.tab-active { color: #0a84ff; }
.stop-disc { fill: #0a84ff; }
.stop-pin { fill: #000; }
.gear * { fill: none; stroke: #6f7172; }
.gear-teeth { stroke-width: 6; stroke-dasharray: 4.450 4.450; }
.gear-ring { stroke-width: 7; }
.gear-hub { stroke-width: 5; }
.gear-spoke { stroke-width: 4.500; }
.home { width: 432px; height: 15px; border-radius: 8px; background: #3a3a3c; margin: 68px auto 0; flex: none; }
```
